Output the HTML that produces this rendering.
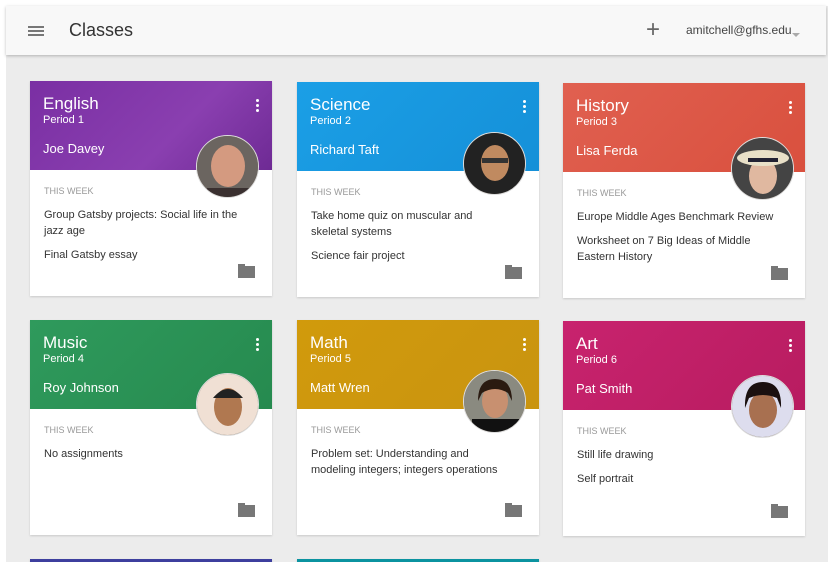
<!DOCTYPE html>
<html style="width:828px;height:562px;overflow:hidden"><head><meta charset="utf-8"><style>
*{margin:0;padding:0;box-sizing:border-box}
body{width:828px;height:562px;background:#fff;font-family:"Liberation Sans",sans-serif;overflow:hidden;position:relative}
.bg{position:absolute;left:6px;top:6px;width:822px;height:556px;background:#ececec}
.hdr{position:absolute;left:6px;top:6px;width:820px;height:49px;background:#f8f8f8;box-shadow:0 1px 3px rgba(0,0,0,.25)}
.menu{position:absolute;left:22px;top:20px;width:16px;height:2px;background:#777;box-shadow:0 4px 0 #777,0 8px 0 #777}
.ttl{position:absolute;left:63px;top:14px;font-size:18px;color:#333}
.plus{position:absolute;left:640px;top:14px;font-size:24px;color:#666;line-height:20px}
.acct{position:absolute;left:680px;top:17px;font-size:12px;color:#444}
.caret{position:absolute;left:786px;top:27px;border:4px solid transparent;border-top:4px solid #aaa}
.card{position:absolute;width:242px;height:215px;background:#fff;box-shadow:0 1px 2px rgba(0,0,0,.15)}
.top{position:absolute;left:0;top:0;width:242px;height:89px;color:#fff;overflow:hidden}
.top .n{position:absolute;left:13px;top:13px;font-size:17px}
.top .p{position:absolute;left:13px;top:33px;font-size:11px}
.top .t{position:absolute;left:13px;top:60px;font-size:13px}
.dots{position:absolute;right:13px;top:18px;width:3px;height:3px;border-radius:50%;background:#fff;box-shadow:0 5px 0 #fff,0 10px 0 #fff}
.av{position:absolute;left:166px;top:54px;width:63px;height:63px;border-radius:50%;overflow:hidden;border:1px solid #ddd;background:#8a7a6a}
.tw{position:absolute;left:14px;top:105px;font-size:9px;color:#999}
.it{position:absolute;left:14px;font-size:11px;color:#333;line-height:16px;width:205px}
.fold{position:absolute;right:17px;bottom:18px;width:17px;height:12px;background:#777}
.fold:before{content:"";position:absolute;left:0;top:-2px;width:7px;height:3px;background:#777}
</style></head><body>
<div class="bg"></div>
<div class="hdr"><div class="menu"></div><div class="ttl">Classes</div><div class="plus">+</div><div class="acct">amitchell@gfhs.edu</div><div class="caret"></div></div>

<div class="card" style="left:30px;top:81px"><div class="top" style="background:linear-gradient(135deg,#7a2fa3,#8a3fb0 60%,#6e2a94)"><div class="n">English</div><div class="p">Period 1</div><div class="t">Joe Davey</div><div class="dots"></div></div>
<div class="av"><svg width="63" height="63"><rect width="63" height="63" fill="#6b6560"/><ellipse cx="31" cy="30" rx="17" ry="21" fill="#d49a80"/><rect x="10" y="52" width="44" height="14" fill="#3a3030"/></svg></div>
<div class="tw">THIS WEEK</div><div class="it" style="top:126px">Group Gatsby projects: Social life in the jazz age</div><div class="it" style="top:166px">Final Gatsby essay</div><div class="fold"></div></div>

<div class="card" style="left:297px;top:82px"><div class="top" style="background:linear-gradient(135deg,#1b9fe6,#1590d8)"><div class="n">Science</div><div class="p">Period 2</div><div class="t">Richard Taft</div><div class="dots"></div></div>
<div class="av" style="top:50px"><svg width="63" height="63"><rect width="63" height="63" fill="#222"/><ellipse cx="31" cy="30" rx="14" ry="18" fill="#c08a60"/><rect x="18" y="25" width="26" height="5" fill="#333"/></svg></div>
<div class="tw">THIS WEEK</div><div class="it" style="top:126px;width:190px">Take home quiz on muscular and skeletal systems</div><div class="it" style="top:166px">Science fair project</div><div class="fold"></div></div>

<div class="card" style="left:563px;top:83px"><div class="top" style="background:linear-gradient(135deg,#e06050,#d9503e)"><div class="n">History</div><div class="p">Period 3</div><div class="t">Lisa Ferda</div><div class="dots"></div></div>
<div class="av" style="left:168px"><svg width="63" height="63"><rect width="63" height="63" fill="#444"/><ellipse cx="31" cy="38" rx="14" ry="18" fill="#e0b8a0"/><ellipse cx="31" cy="20" rx="26" ry="8" fill="#e8e0c8"/><rect x="16" y="20" width="30" height="4" fill="#223"/></svg></div>
<div class="tw">THIS WEEK</div><div class="it" style="top:126px">Europe Middle Ages Benchmark Review</div><div class="it" style="top:150px;width:190px">Worksheet on 7 Big Ideas of Middle Eastern History</div><div class="fold"></div></div>

<div class="card" style="left:30px;top:320px"><div class="top" style="background:linear-gradient(135deg,#2f9a5c,#268a4f)"><div class="n">Music</div><div class="p">Period 4</div><div class="t">Roy Johnson</div><div class="dots"></div></div>
<div class="av" style="top:53px"><svg width="63" height="63"><rect width="63" height="63" fill="#f0e0d4"/><ellipse cx="31" cy="33" rx="14" ry="19" fill="#b07850"/><path d="M16 24 Q31 6 46 24 Z" fill="#222"/></svg></div>
<div class="tw">THIS WEEK</div><div class="it" style="top:126px">No assignments</div><div class="fold"></div></div>

<div class="card" style="left:297px;top:320px"><div class="top" style="background:linear-gradient(135deg,#d19a0c,#c99410)"><div class="n">Math</div><div class="p">Period 5</div><div class="t">Matt Wren</div><div class="dots"></div></div>
<div class="av" style="top:50px"><svg width="63" height="63"><rect width="63" height="63" fill="#8a8a80"/><ellipse cx="31" cy="30" rx="13" ry="17" fill="#c89070"/><path d="M14 30 Q14 8 31 8 Q48 8 48 30 L44 22 Q31 14 18 22 Z" fill="#2a1a10"/><rect x="8" y="48" width="48" height="16" fill="#111"/></svg></div>
<div class="tw">THIS WEEK</div><div class="it" style="top:126px;width:190px">Problem set: Understanding and modeling integers; integers operations</div><div class="fold"></div></div>

<div class="card" style="left:563px;top:321px"><div class="top" style="background:linear-gradient(135deg,#c8236e,#b81c60)"><div class="n">Art</div><div class="p">Period 6</div><div class="t">Pat Smith</div><div class="dots"></div></div>
<div class="av" style="left:168px;top:54px"><svg width="63" height="63"><rect width="63" height="63" fill="#dde"/><ellipse cx="31" cy="34" rx="14" ry="18" fill="#a87050"/><path d="M13 32 Q12 6 31 6 Q50 6 49 32 L45 22 Q31 16 17 22 Z" fill="#1a1010"/></svg></div>
<div class="tw">THIS WEEK</div><div class="it" style="top:126px">Still life drawing</div><div class="it" style="top:150px">Self portrait</div><div class="fold"></div></div>

<div class="card" style="left:30px;top:559px;height:3px;background:#3d3f9e"></div>
<div class="card" style="left:297px;top:559px;height:3px;background:#0b93a0"></div>
</body></html>
